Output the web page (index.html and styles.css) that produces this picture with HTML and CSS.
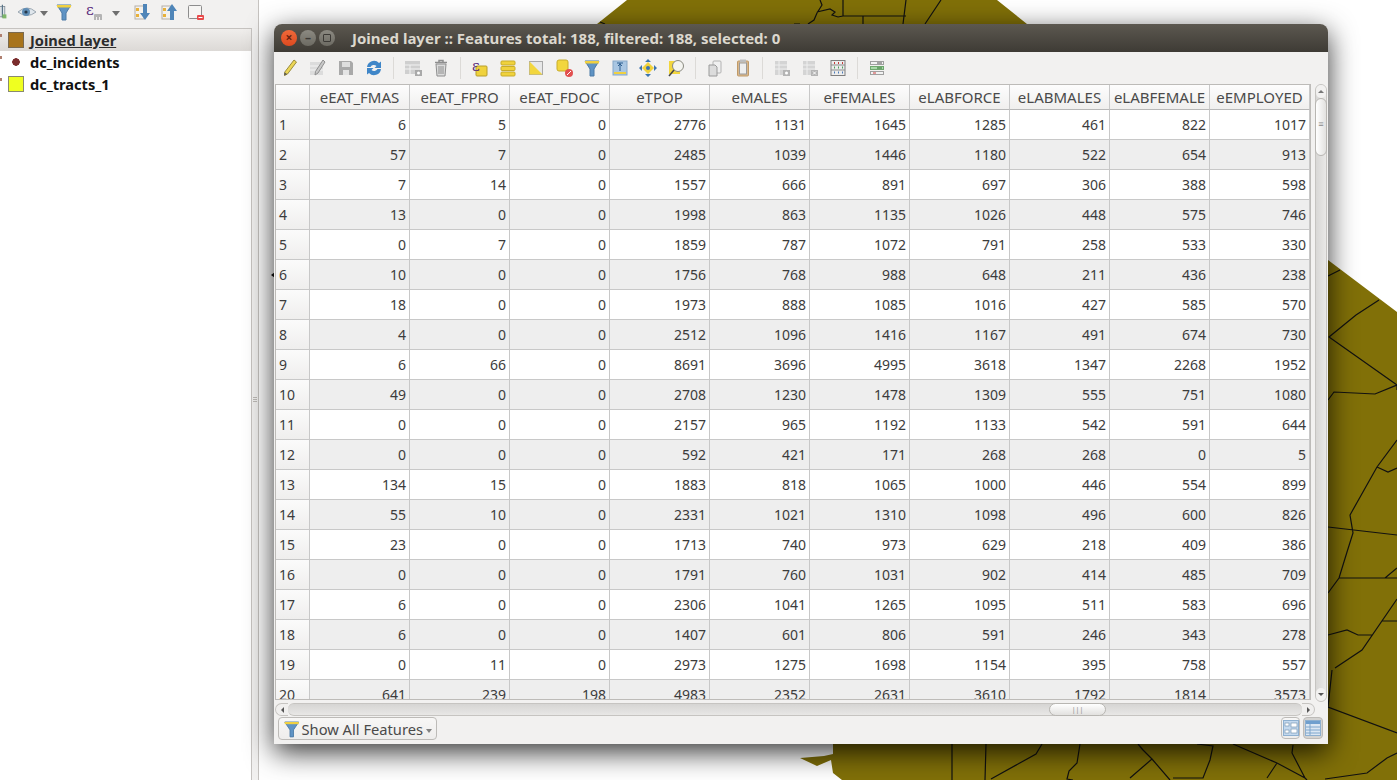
FILE: index.html
```html
<!DOCTYPE html>
<html>
<head>
    <title>Joined layer</title>
    <link rel="stylesheet" href="styles.css">
</head>
<body>
    <div class="app">
        <div class="side">
            <div class="side-tools">
                <span class="slot slot-cut"><svg width="20" height="20" viewBox="0 0 20 20"><rect x="-6" y="3" width="12" height="13" fill="#dfe3e6" stroke="#7d8a94"/><path d="M-2 1v16M3 1v16" stroke="#5a7488" stroke-width="1.5"/><rect x="3" y="13" width="5" height="5" fill="#7fb66a"/></svg></span>
                <span class="slot slot-eye"><svg width="22" height="20" viewBox="0 0 22 20"><path d="M1 10q9-8 18 0q-9 7-18 0z" fill="#dfe6ec" stroke="#9aa6b0"/><circle cx="9" cy="10" r="4" fill="#5f8db5"/><circle cx="9" cy="10" r="1.6" fill="#26384a"/></svg><i class="caret"></i></span>
                <span class="slot slot-m"><svg width="20" height="20" viewBox="0 0 20 20"><path d="M3 3h14l-5 8v7h-4v-7z" fill="#5f93c4" stroke="#4c7aa6"/><rect x="3" y="3" width="14" height="2.5" fill="#f0d040"/></svg></span>
                <span class="slot slot-m"><svg class="over" width="20" height="20" viewBox="0 0 20 20"><text x="5" y="13" class="eps">ε</text><path d="M13 18v-5q0-1 1-1h6q1 0 1 1v5h-2v-3h-1v3h-2v-3h-1v3z" fill="#b4b4b4"/></svg></span>
                <span class="slot slot-s"><i class="caret"></i></span>
                <span class="slot slot-m"><svg width="20" height="20" viewBox="0 0 20 20"><rect x="3" y="4" width="9" height="13" fill="#f4f2ee" stroke="#b5b0a8"/><rect x="4" y="6" width="3" height="3" fill="#e8b13a"/><rect x="4" y="12" width="3" height="3" fill="#e8b13a"/><path d="M11 2h4v9h3l-5 7l-5-7h3z" fill="#4f85b8"/></svg></span>
                <span class="slot slot-m"><svg width="20" height="20" viewBox="0 0 20 20"><rect x="3" y="4" width="9" height="13" fill="#f4f2ee" stroke="#b5b0a8"/><rect x="4" y="6" width="3" height="3" fill="#e8b13a"/><rect x="4" y="12" width="3" height="3" fill="#e8b13a"/><path d="M11 18h4v-9h3l-5-7l-5 7h3z" fill="#4f85b8"/></svg></span>
                <span class="slot slot-m"><svg width="20" height="20" viewBox="0 0 20 20"><rect x="2.500" y="3.500" width="13" height="13" rx="1" fill="#f6f5f3" stroke="#8d8d8d"/><rect x="11" y="13" width="7" height="5" rx="1" fill="#e84a4a"/><rect x="12.500" y="15" width="4" height="1" fill="#fff"/></svg></span>
            </div>
            <div class="tree">
                <div class="tree-row tree-row-on"><i class="twig"></i><i class="swatch swatch-brown"></i><span class="layer layer-on">Joined layer</span></div>
                <div class="tree-row"><i class="twig"></i><i class="swatch swatch-dot"></i><span class="layer">dc_incidents</span></div>
                <div class="tree-row"><i class="twig"></i><i class="swatch swatch-yellow"></i><span class="layer">dc_tracts_1</span></div>
            </div>
        </div>
        <div class="splitter"><i></i><i></i><i></i></div>
        <div class="canvas">
            <svg class="map" width="1138" height="780" viewBox="259 0 1138 780">
                <path class="tract" d="M627 0L597 24L597 30L1328 30L1328 260L1397 312L1397 780L842 780L833 773L831 760L817 766L800 758L824 756L833 754L833 740L1027 24L997 0z"/>
                <path class="tract" d="M597 24H1027V744H833V600H597z"/>
                <path class="edge" d="M600 22L605 24M820 0L822 5L817 13L814 20L808 24M817 12L830 9L835 12L832 15L838 17L843 16M843 0V16H906M906 0L903 24M863 16V24M941 0L925 24M794 24H800"/>
                <path class="edge" d="M1328 276L1340 270M1379 300L1356 315L1329 337L1397 385M1328 400L1334 392L1375 394L1397 385L1397 390M1397 440L1377 467L1350 515L1353 533L1347 552L1339 578L1328 593M1328 527L1397 535M1339 578H1397M1385 578L1397 568M1377 467L1388 472L1397 468M1397 599L1362 650L1335 668M1382 621H1397M1328 635L1347 630L1358 635L1372 635M1332 670L1328 707L1397 733"/>
                <path class="edge" d="M952 744V780M986 744L985 780M1042 744L1036 754L991 779M1080 744L1077 763L1069 771L1067 779L1073 780M1143 750L1152 759L1130 778M1152 759L1170 780M1138 744L1143 750M1197 744L1213 746L1210 760L1203 778L1173 778M1233 744L1277 763L1305 778L1307 780M1277 763L1267 778M1293 745L1292 753L1305 778M1325 779L1367 773L1387 758L1397 753"/>
                <path class="tip" d="M275 272L271 275L275 278z"/>
            </svg>
        </div>
    </div>

    <div class="win">
        <div class="win-title">
            <span class="dot dot-close">×</span>
            <span class="dot dot-min">–</span>
            <span class="dot dot-max"><i class="dot-box"></i></span>
            <span class="win-name">Joined layer :: Features total: 188, filtered: 188, selected: 0</span>
        </div>
        <div class="tools">
            <span class="tool"><svg width="20" height="20" viewBox="0 0 20 20"><path d="M14 2l2.500 2l-9 12l-3 1.500l.3-3.500z" fill="#ecd656" stroke="#9a8c3c"/><path d="M4.500 14.500l-.3 3l3-1.500z" fill="#555"/></svg></span>
            <span class="tool"><svg width="20" height="20" viewBox="0 0 20 20"><rect x="2" y="4" width="13" height="13" fill="#dcdcdc"/><path d="M2 8h13M2 12h13" stroke="#f4f4f4"/><path d="M15 2l2 2l-7 11l-3 2l.5-3.500z" fill="#c8c8c8" stroke="#8f8f8f"/></svg></span>
            <span class="tool"><svg width="20" height="20" viewBox="0 0 20 20"><path d="M3 3h12l2 2v12H3z" fill="#a9a9a9"/><rect x="6" y="4" width="8" height="5" fill="#dedede"/><rect x="7" y="12" width="6" height="5" fill="#e4e4e4"/></svg></span>
            <span class="tool"><svg width="20" height="20" viewBox="0 0 20 20"><path d="M3 9a7 7 0 0 1 12-4l2-1.500v6.500h-6.500l2-2a4 4 0 0 0-6 1z" fill="#3f86c8"/><path d="M17 11a7 7 0 0 1-12 4l-2 1.500v-6.500h6.500l-2 2a4 4 0 0 0 6-1z" fill="#3f86c8"/></svg></span>
            <i class="tool-sep"></i>
            <span class="tool"><svg width="20" height="20" viewBox="0 0 20 20"><rect x="2" y="3" width="15" height="13" fill="#cfcfcf"/><path d="M2 7h15M2 11h15M7 7v9" stroke="#f2f2f2"/><rect x="12" y="12" width="7" height="6" fill="#a9a9a9"/><circle cx="15.500" cy="15" r="1.500" fill="#fff"/></svg></span>
            <span class="tool"><svg width="20" height="20" viewBox="0 0 20 20"><path d="M4 4.500h12M8 4V2.500h4V4" fill="none" stroke="#8e8e8e" stroke-width="1.500"/><path d="M5 6h10l-1 12H6z" fill="#dcdcdc" stroke="#8e8e8e"/><path d="M8 8v8M10 8v8M12 8v8" stroke="#8e8e8e"/></svg></span>
            <i class="tool-sep"></i>
            <span class="tool"><svg width="20" height="20" viewBox="0 0 20 20"><rect x="6" y="8" width="11" height="10" rx="1" fill="#f0d23c" stroke="#b89e2a"/><text x="2" y="13" class="eps">ε</text></svg></span>
            <span class="tool"><svg width="20" height="20" viewBox="0 0 20 20"><rect x="3" y="3" width="14" height="4" rx="1" fill="#f0d23c" stroke="#c8ac2a"/><rect x="3" y="8.500" width="14" height="4" rx="1" fill="#f0d23c" stroke="#c8ac2a"/><rect x="3" y="14" width="14" height="4" rx="1" fill="#f0d23c" stroke="#c8ac2a"/></svg></span>
            <span class="tool"><svg width="20" height="20" viewBox="0 0 20 20"><rect x="3.500" y="3.500" width="13" height="13" fill="#e8e8e8" stroke="#a8a8a8"/><path d="M3.500 3.500L16.500 16.500H3.500z" fill="#f2d63e"/></svg></span>
            <span class="tool"><svg width="20" height="20" viewBox="0 0 20 20"><rect x="3" y="2" width="11" height="11" rx="2" fill="#f2d63e" stroke="#c8ac2a"/><circle cx="15" cy="15" r="4" fill="#e25050"/><path d="M13 17l4-4" stroke="#fff"/></svg></span>
            <span class="tool"><svg width="20" height="20" viewBox="0 0 20 20"><path d="M3 3h14l-5 8v7h-4v-7z" fill="#5f93c4" stroke="#4c7aa6"/><rect x="3" y="3" width="14" height="2.500" fill="#f0d040"/></svg></span>
            <span class="tool"><svg width="20" height="20" viewBox="0 0 20 20"><rect x="3" y="3" width="14" height="14" fill="#a9c6e2" stroke="#86a8c8"/><path d="M7 5h6M10 5v8M8 8l2-2l2 2" stroke="#2c5f90" fill="none"/><rect x="4" y="14" width="12" height="2" fill="#f0d040"/></svg></span>
            <span class="tool"><svg width="20" height="20" viewBox="0 0 20 20"><path d="M10 4l6 6l-6 6l-6-6z" fill="#f0d23c"/><path d="M10 1l3 3h-6zM10 19l3-3h-6zM1 10l3-3v6zM19 10l-3-3v6z" fill="#3c74b0"/><circle cx="10" cy="10" r="2" fill="#3c74b0"/></svg></span>
            <span class="tool"><svg width="20" height="20" viewBox="0 0 20 20"><rect x="3" y="3" width="11" height="13" fill="#f2d63e"/><circle cx="12" cy="8" r="5.500" fill="#f4f4f0" stroke="#8a8a80"/><path d="M8 12l-5 6" stroke="#444" stroke-width="1.500"/></svg></span>
            <i class="tool-sep"></i>
            <span class="tool"><svg width="20" height="20" viewBox="0 0 20 20"><rect x="8" y="3" width="8" height="12" rx="1" fill="#f0f0f0" stroke="#b2b2b2"/><path d="M4 7h6l2 2v9H4z" fill="#dcdcdc" stroke="#9a9a9a"/></svg></span>
            <span class="tool"><svg width="20" height="20" viewBox="0 0 20 20"><rect x="4.500" y="3" width="11" height="15" rx="1" fill="#d8b78c" stroke="#c09a68"/><rect x="6.500" y="5" width="7" height="11" fill="#eeeeee" stroke="#9a9a9a"/><rect x="7" y="1.500" width="6" height="3" fill="#bdbdbd"/></svg></span>
            <i class="tool-sep"></i>
            <span class="tool"><svg width="20" height="20" viewBox="0 0 20 20"><rect x="3" y="3" width="12" height="14" fill="#d4d4d4"/><path d="M3 7h12M3 11h12M7 3v14" stroke="#efefef"/><rect x="11" y="12" width="7" height="6" fill="#b4b4b4"/><circle cx="14.500" cy="15" r="1.500" fill="#fff"/></svg></span>
            <span class="tool"><svg width="20" height="20" viewBox="0 0 20 20"><rect x="3" y="3" width="12" height="14" fill="#d4d4d4"/><path d="M3 7h12M3 11h12M7 3v14" stroke="#efefef"/><rect x="11" y="12" width="7" height="6" fill="#b4b4b4"/><path d="M13 13.500l3 3M16 13.500l-3 3" stroke="#fff"/></svg></span>
            <span class="tool"><svg width="20" height="20" viewBox="0 0 20 20"><rect x="3" y="2.500" width="14" height="15" fill="#ececec" stroke="#7e7e7e"/><path d="M3 7h14M3 12h14" stroke="#8c8c8c"/><path d="M6 5h1M10 5h1M14 5h1" stroke="#c43c3c" stroke-width="2"/><path d="M6 9.500h1M10 9.500h1M14 9.500h1" stroke="#4c9c5c" stroke-width="2"/><path d="M6 14.500h1M10 14.500h1M14 14.500h1" stroke="#4c7cb8" stroke-width="2"/></svg></span>
            <i class="tool-sep"></i>
            <span class="tool"><svg width="20" height="20" viewBox="0 0 20 20"><rect x="3.500" y="3.500" width="13" height="3" fill="#f2f2f2" stroke="#a0a0a0"/><rect x="3.500" y="8.500" width="13" height="3" fill="#a8d8a8" stroke="#6ea86e"/><rect x="3.500" y="13.500" width="13" height="3" fill="#f2f2f2" stroke="#a0a0a0"/><path d="M6 15h3" stroke="#d04040"/><path d="M10 5h5" stroke="#555"/><path d="M10 10h5" stroke="#2c6c2c"/></svg></span>
        </div>
        <div class="body">
            <div class="body-main">
                <div class="grid-view">
                    <table class="grid">
                        <thead>
                            <tr><th class="corner"></th><th>eEAT_FMAS</th><th>eEAT_FPRO</th><th>eEAT_FDOC</th><th>eTPOP</th><th>eMALES</th><th>eFEMALES</th><th>eLABFORCE</th><th>eLABMALES</th><th>eLABFEMALE</th><th>eEMPLOYED</th></tr>
                        </thead>
                        <tbody>
                            <tr><th>1</th><td>6</td><td>5</td><td>0</td><td>2776</td><td>1131</td><td>1645</td><td>1285</td><td>461</td><td>822</td><td>1017</td></tr>
                            <tr><th>2</th><td>57</td><td>7</td><td>0</td><td>2485</td><td>1039</td><td>1446</td><td>1180</td><td>522</td><td>654</td><td>913</td></tr>
                            <tr><th>3</th><td>7</td><td>14</td><td>0</td><td>1557</td><td>666</td><td>891</td><td>697</td><td>306</td><td>388</td><td>598</td></tr>
                            <tr><th>4</th><td>13</td><td>0</td><td>0</td><td>1998</td><td>863</td><td>1135</td><td>1026</td><td>448</td><td>575</td><td>746</td></tr>
                            <tr><th>5</th><td>0</td><td>7</td><td>0</td><td>1859</td><td>787</td><td>1072</td><td>791</td><td>258</td><td>533</td><td>330</td></tr>
                            <tr><th>6</th><td>10</td><td>0</td><td>0</td><td>1756</td><td>768</td><td>988</td><td>648</td><td>211</td><td>436</td><td>238</td></tr>
                            <tr><th>7</th><td>18</td><td>0</td><td>0</td><td>1973</td><td>888</td><td>1085</td><td>1016</td><td>427</td><td>585</td><td>570</td></tr>
                            <tr><th>8</th><td>4</td><td>0</td><td>0</td><td>2512</td><td>1096</td><td>1416</td><td>1167</td><td>491</td><td>674</td><td>730</td></tr>
                            <tr><th>9</th><td>6</td><td>66</td><td>0</td><td>8691</td><td>3696</td><td>4995</td><td>3618</td><td>1347</td><td>2268</td><td>1952</td></tr>
                            <tr><th>10</th><td>49</td><td>0</td><td>0</td><td>2708</td><td>1230</td><td>1478</td><td>1309</td><td>555</td><td>751</td><td>1080</td></tr>
                            <tr><th>11</th><td>0</td><td>0</td><td>0</td><td>2157</td><td>965</td><td>1192</td><td>1133</td><td>542</td><td>591</td><td>644</td></tr>
                            <tr><th>12</th><td>0</td><td>0</td><td>0</td><td>592</td><td>421</td><td>171</td><td>268</td><td>268</td><td>0</td><td>5</td></tr>
                            <tr><th>13</th><td>134</td><td>15</td><td>0</td><td>1883</td><td>818</td><td>1065</td><td>1000</td><td>446</td><td>554</td><td>899</td></tr>
                            <tr><th>14</th><td>55</td><td>10</td><td>0</td><td>2331</td><td>1021</td><td>1310</td><td>1098</td><td>496</td><td>600</td><td>826</td></tr>
                            <tr><th>15</th><td>23</td><td>0</td><td>0</td><td>1713</td><td>740</td><td>973</td><td>629</td><td>218</td><td>409</td><td>386</td></tr>
                            <tr><th>16</th><td>0</td><td>0</td><td>0</td><td>1791</td><td>760</td><td>1031</td><td>902</td><td>414</td><td>485</td><td>709</td></tr>
                            <tr><th>17</th><td>6</td><td>0</td><td>0</td><td>2306</td><td>1041</td><td>1265</td><td>1095</td><td>511</td><td>583</td><td>696</td></tr>
                            <tr><th>18</th><td>6</td><td>0</td><td>0</td><td>1407</td><td>601</td><td>806</td><td>591</td><td>246</td><td>343</td><td>278</td></tr>
                            <tr><th>19</th><td>0</td><td>11</td><td>0</td><td>2973</td><td>1275</td><td>1698</td><td>1154</td><td>395</td><td>758</td><td>557</td></tr>
                            <tr><th>20</th><td>641</td><td>239</td><td>198</td><td>4983</td><td>2352</td><td>2631</td><td>3610</td><td>1792</td><td>1814</td><td>3573</td></tr>
                        </tbody>
                    </table>
                </div>
                <div class="hbar">
                    <span class="hbar-end"><i class="arrow-left"></i></span>
                    <div class="hbar-track">
                        <span class="hbar-thumb">|||</span>
                    </div>
                    <span class="hbar-end"><i class="arrow-right"></i></span>
                </div>
            </div>
            <div class="vbar">
                <span class="vbar-end"><i class="arrow-up"></i></span>
                <span class="vbar-thumb">≡</span>
                <span class="vbar-rest"></span>
                <span class="vbar-end"><i class="arrow-down"></i></span>
            </div>
        </div>
        <div class="foot">
            <button class="filter-btn"><svg width="18" height="18" viewBox="0 0 20 20"><path d="M2 2h16l-6 9v8h-4v-8z" fill="#5f93c4" stroke="#4c7aa6"/><rect x="2" y="2" width="16" height="2.500" fill="#f0d040"/></svg>Show All Features<i class="caret caret-small"></i></button>
            <div class="views">
                <button class="view-btn"><svg width="16" height="16" viewBox="0 0 16 16"><rect x=".5" y=".5" width="15" height="15" fill="#c4d9ee" stroke="#8eb0d0"/><rect x="2" y="3" width="4" height="3" fill="#fff" stroke="#6a8aa8" stroke-width=".6"/><rect x="2" y="10" width="4" height="3" fill="#fff" stroke="#6a8aa8" stroke-width=".6"/><rect x="8" y="3" width="6" height="4" fill="#fff" stroke="#6a8aa8" stroke-width=".6"/><rect x="8" y="9" width="6" height="4" fill="#fff" stroke="#6a8aa8" stroke-width=".6"/></svg></button>
                <button class="view-btn view-btn-on"><svg width="16" height="16" viewBox="0 0 16 16"><rect x=".5" y=".5" width="15" height="15" fill="#dbe7f3" stroke="#8eb0d0"/><rect x="1" y="1" width="14" height="3" fill="#6f9fce"/><path d="M1 7h14M1 10h14M1 13h14M5 4v11" stroke="#7fa6cc"/></svg></button>
            </div>
        </div>
    </div>
</body>
</html>
```
FILE: styles.css
```css
html, body {
    margin: 0;
    padding: 0;
    height: 100%;
    overflow: hidden;
    background-color: #fff;
    font-family: "Noto Sans", sans-serif;
    font-size: 14px;
}

.app {
    display: flex;
    width: 1397px;
    height: 780px;
}

/* left panel */
.side {
    width: 252px;
    flex: none;
    display: flex;
    flex-direction: column;
    background-color: #f2f1f0;
}

.side-tools {
    height: 28px;
    flex: none;
    display: flex;
    align-items: center;
    overflow: hidden;
    padding-bottom: 4px;
    box-sizing: border-box;
}

.slot {
    display: flex;
    align-items: center;
    justify-content: center;
    height: 20px;
}

.slot-cut {
    width: 16px;
    justify-content: flex-start;
}

.slot-eye {
    width: 33px;
    gap: 1px;
    margin-right: 1px;
}

.slot-m {
    width: 27px;
}

.slot-s {
    width: 24px;
}

.over {
    overflow: visible;
}

.caret {
    display: block;
    width: 0;
    height: 0;
    border-left: 4px solid transparent;
    border-right: 4px solid transparent;
    border-top: 5px solid #6f6f6f;
    margin-top: 3px;
}

.caret-small {
    border-left-width: 3.5px;
    border-right-width: 3.5px;
    border-top-width: 4px;
    margin: 5px 0 0 3px;
    border-top-color: #808080;
}

.eps {
    font-family: "DejaVu Serif", serif;
    font-size: 15px;
    fill: #5b2d7c;
}

.tree {
    flex: 1;
    background-color: #fff;
    border-top: 1px solid #c6c3c0;
    border-right: 1px solid #c6c3c0;
    padding-top: 0;
}

.tree-row {
    display: flex;
    align-items: center;
    height: 22px;
}

.tree-row-on {
    background: linear-gradient(#f0eeec, #dcd9d6);
}

.twig {
    width: 2px;
    height: 3px;
    margin-right: 6px;
    margin-bottom: 10px;
    background-color: #b08070;
}

.swatch {
    width: 16px;
    height: 16px;
    box-sizing: border-box;
    margin-right: 6px;
    flex: none;
}

.swatch-brown {
    background-color: #a8741c;
    border: 1px solid #7a6a50;
}

.swatch-yellow {
    background-color: #efff20;
    border: 1px solid #8a8a70;
}

.swatch-dot {
    background: radial-gradient(circle at center, #7a2c2c 3.5px, transparent 4px);
}

.layer {
    font-weight: bold;
    font-size: 14.6px;
    color: #111;
}

.layer-on {
    color: #2c2c2c;
    text-decoration: underline;
}

.splitter {
    width: 6px;
    flex: none;
    display: flex;
    flex-direction: column;
    align-items: center;
    justify-content: center;
    gap: 1px;
    background-color: #f2f1f0;
    border-right: 1px solid #c6c3c0;
    padding-top: 18px;
    box-sizing: content-box;
}

.splitter i {
    display: block;
    width: 4px;
    height: 1px;
    background-color: #bdbab6;
}

/* map */
.canvas {
    flex: 1;
    position: relative;
    overflow: hidden;
    background-color: #fff;
}

.map {
    position: absolute;
    left: 0;
    top: 0;
    display: block;
}

.tract {
    fill: #817008;
}

.edge {
    fill: none;
    stroke: #111;
    stroke-width: 1.2;
}

.tip {
    fill: #111;
}

/* attribute table window */
.win {
    position: absolute;
    left: 274px;
    top: 24px;
    width: 1054px;
    height: 720px;
    display: flex;
    flex-direction: column;
    background-color: #f2f1f0;
    border-radius: 8px 8px 0 0;
    box-shadow: 0 8px 28px rgba(0, 0, 0, 0.8);
    color: #3c3c3c;
}

.win-title {
    height: 28px;
    flex: none;
    display: flex;
    align-items: center;
    padding-left: 7px;
    background: linear-gradient(#5c5850, #3e3b35);
    border-radius: 8px 8px 0 0;
}

.dot {
    width: 16px;
    height: 16px;
    margin-right: 3px;
    border-radius: 50%;
    display: flex;
    align-items: center;
    justify-content: center;
    font-size: 12px;
    font-weight: bold;
    line-height: 1;
    color: #3c3a36;
    background: linear-gradient(#8c8a82, #6c6a62);
}

.dot-close {
    background: linear-gradient(#f0693a, #dc4a20);
    color: #6a2410;
}

.dot-box {
    display: block;
    width: 6px;
    height: 6px;
    border: 1px solid #3c3a36;
    border-radius: 1px;
}

.win-name {
    margin-left: 14px;
    font-weight: bold;
    font-size: 15px;
    color: #dcd8ce;
    white-space: nowrap;
}

.tools {
    height: 32px;
    flex: none;
    display: flex;
    align-items: center;
    padding-left: 2px;
}

.tool {
    width: 28px;
    height: 28px;
    display: flex;
    align-items: center;
    justify-content: center;
}

.tool-sep {
    width: 1px;
    height: 22px;
    margin: 0 5px;
    background-color: #dcdad7;
}

.body {
    flex: 1;
    display: flex;
    min-height: 0;
}

.body-main {
    width: 1041px;
    flex: none;
    padding-left: 1px;
    box-sizing: border-box;
}

.grid-view {
    width: 1036px;
    height: 616px;
    box-sizing: border-box;
    border: 1px solid #bdbbb8;
    background-color: #fff;
    overflow: hidden;
}

.grid {
    table-layout: fixed;
    width: 1034px;
    border-collapse: separate;
    border-spacing: 0;
}

.grid th,
.grid td {
    box-sizing: border-box;
    height: 30px;
    width: 100px;
    padding: 0 3px;
    font-weight: normal;
    border-right: 1px solid #c8c8c8;
    border-bottom: 1px solid #c8c8c8;
    text-align: right;
    white-space: nowrap;
    overflow: hidden;
}

.grid thead th {
    height: 25px;
    font-size: 15px;
    text-align: center;
    color: #4a4a4a;
    background: linear-gradient(#fdfdfd, #f0efee);
    border-bottom-color: #b8b8b8;
    padding: 0;
}

.grid .corner {
    width: 34px;
}

.grid tbody th {
    text-align: left;
    background: linear-gradient(#fbfbfb, #efeeed);
}

.grid tbody tr:nth-child(even) td {
    background-color: #eeeeee;
}

.hbar {
    display: flex;
    height: 13px;
    margin-top: 3px;
}

.hbar-end {
    width: 13px;
    flex: none;
    display: flex;
    align-items: center;
    justify-content: center;
    border: 1px solid #c6c4c1;
    box-sizing: border-box;
    background-color: #f0efee;
}

.hbar-end:first-child {
    border-radius: 7px 0 0 7px;
    border-right: 0;
}

.hbar-end:last-child {
    border-radius: 0 7px 7px 0;
    border-left: 0;
}

.hbar-track {
    flex: 1;
    padding-left: 761px;
    box-sizing: border-box;
    background: linear-gradient(#d6d5d3, #e8e7e6);
    border: 1px solid #c6c4c1;
    border-width: 1px 0;
    border-radius: 6px;
}

.hbar-thumb {
    display: block;
    width: 57px;
    height: 13px;
    margin-top: -1px;
    box-sizing: border-box;
    border: 1px solid #b8b6b2;
    border-radius: 7px;
    background: linear-gradient(#fff, #e2e1df);
    font-size: 7px;
    line-height: 11px;
    text-align: center;
    color: #888;
}

.arrow-left,
.arrow-right,
.arrow-up,
.arrow-down {
    display: block;
    width: 0;
    height: 0;
    border: 3px solid transparent;
}

.arrow-left {
    border-right-color: #555;
    border-left-width: 0;
}

.arrow-right {
    border-left-color: #555;
    border-right-width: 0;
}

.arrow-up {
    border-bottom-color: #777;
    border-top-width: 0;
}

.arrow-down {
    border-top-color: #555;
    border-bottom-width: 0;
}

.vbar {
    width: 12px;
    height: 618px;
    flex: none;
    display: flex;
    flex-direction: column;
    box-sizing: border-box;
    border: 1px solid #c6c4c1;
    border-radius: 6px;
    background: linear-gradient(90deg, #d8d7d5, #e9e8e7);
}

.vbar-end {
    height: 13px;
    flex: none;
    display: flex;
    align-items: center;
    justify-content: center;
    background-color: #f2f1f0;
    border-radius: 6px;
}

.vbar-thumb {
    height: 58px;
    flex: none;
    margin: 0 -1px;
    border: 1px solid #b8b6b2;
    border-radius: 6px;
    box-sizing: border-box;
    background: linear-gradient(90deg, #fff, #e2e1df);
    font-size: 9px;
    line-height: 50px;
    text-align: center;
    color: #888;
}

.vbar-rest {
    flex: 1;
}

.foot {
    height: 28px;
    flex: none;
    display: flex;
    justify-content: space-between;
    align-items: flex-start;
    padding: 1px 5px 0 4px;
    box-sizing: border-box;
}

.filter-btn {
    width: 159px;
    height: 23px;
    display: flex;
    align-items: center;
    padding: 0 4px 0 4px;
    box-sizing: border-box;
    border: 1px solid #bdbbb8;
    border-radius: 4px;
    background: linear-gradient(#f8f7f6, #eeedec);
    font-family: "Noto Sans", sans-serif;
    font-size: 14.7px;
    color: #4a4a4a;
    white-space: nowrap;
}

.filter-btn svg {
    margin-right: 1px;
}

.views {
    display: flex;
    gap: 3px;
}

.view-btn {
    width: 19px;
    height: 22px;
    padding: 0;
    display: flex;
    align-items: center;
    justify-content: center;
    border: 1px solid #bdbbb8;
    border-radius: 4px;
    background: linear-gradient(#f8f7f6, #eeedec);
}

.view-btn-on {
    width: 20px;
    background: #d4d3d1;
}
```
